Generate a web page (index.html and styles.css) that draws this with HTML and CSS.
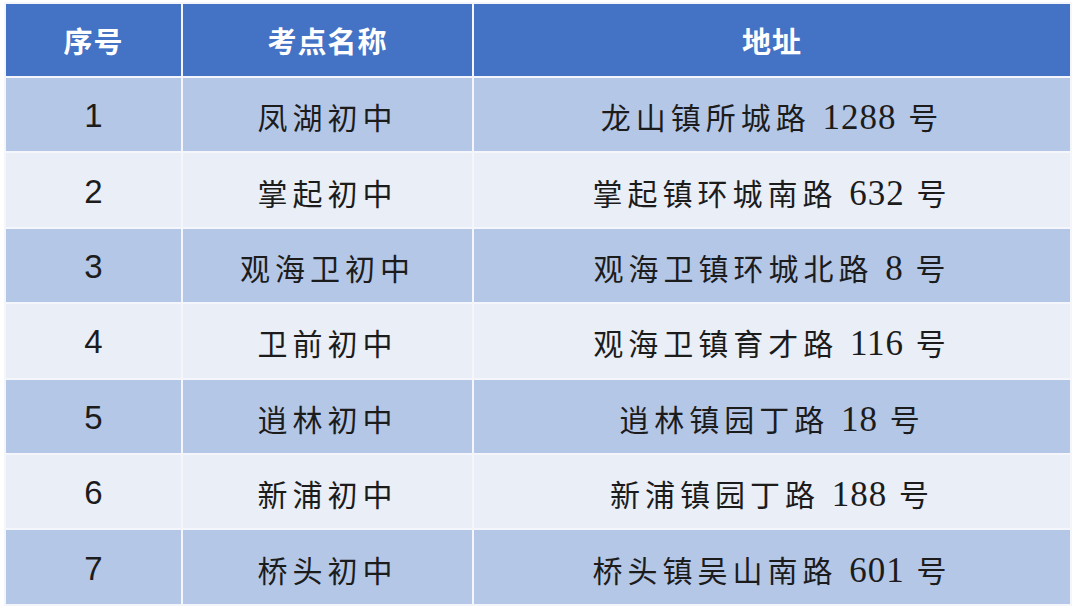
FILE: index.html
```html
<!DOCTYPE html>
<html lang="zh">
<head>
<meta charset="utf-8">
<link rel="stylesheet" href="styles.css">
</head>
<body>
<table class="sites">
  <colgroup>
    <col class="c1"><col class="c2"><col class="c3">
  </colgroup>
  <thead>
    <tr><th>序号</th><th>考点名称</th><th>地址</th></tr>
  </thead>
  <tbody>
    <tr><td class="num">1</td><td>凤湖初中</td><td>龙山镇所城路 <span class="n">1288</span> 号</td></tr>
    <tr><td class="num">2</td><td>掌起初中</td><td>掌起镇环城南路 <span class="n">632</span> 号</td></tr>
    <tr><td class="num">3</td><td>观海卫初中</td><td>观海卫镇环城北路 <span class="n">8</span> 号</td></tr>
    <tr><td class="num">4</td><td>卫前初中</td><td>观海卫镇育才路 <span class="n">116</span> 号</td></tr>
    <tr><td class="num">5</td><td>逍林初中</td><td>逍林镇园丁路 <span class="n">18</span> 号</td></tr>
    <tr><td class="num">6</td><td>新浦初中</td><td>新浦镇园丁路 <span class="n">188</span> 号</td></tr>
    <tr><td class="num">7</td><td>桥头初中</td><td>桥头镇吴山南路 <span class="n">601</span> 号</td></tr>
  </tbody>
</table>
</body>
</html>
```
FILE: styles.css
```css
html, body {
  margin: 0;
  padding: 0;
  background: #ffffff;
}
body {
  padding: 2px 0 0 4px;
  font-family: "Noto Sans CJK SC", sans-serif;
}
.sites {
  border-collapse: collapse;
  table-layout: fixed;
  width: 1066px;
}
.c1 { width: 177px; }
.c2 { width: 291px; }
.c3 { width: 598px; }
.sites th, .sites td {
  border: 2px solid #f4f6fb;
  text-align: center;
  vertical-align: middle;
  padding: 0;
}
.sites th {
  background: #4472c4;
  color: #ffffff;
  font-weight: 700;
  font-size: 29px;
  height: 72px;
  letter-spacing: 1px;
}
.sites tbody tr {
  height: 75.4px;
}
.sites td {
  color: #1c1c1c;
  font-size: 30px;
  font-weight: 400;
  letter-spacing: 5px;
  padding-top: 3px;
}
.sites tbody tr:nth-child(odd) td { background: #b4c7e7; }
.sites tbody tr:nth-child(even) td { background: #e9eef7; }
.sites td.num {
  font-family: "Liberation Sans", sans-serif;
  letter-spacing: 0;
  font-size: 33px;
}
.n {
  font-family: "Liberation Serif", serif;
  font-size: 35px;
  letter-spacing: 1px;
}
```
